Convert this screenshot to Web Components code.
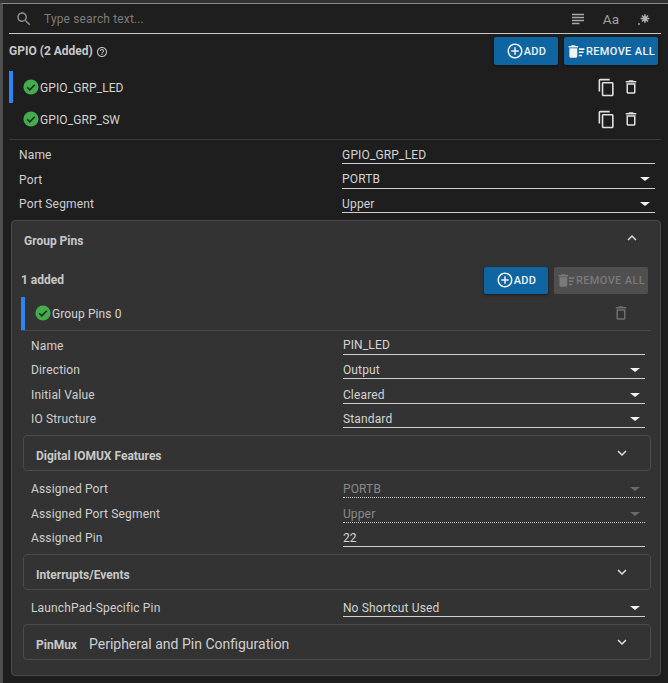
<!DOCTYPE html>
<html>
<head>
<meta charset="utf-8">
<title>GPIO</title>
<style>
    html, body { margin: 0; height: 100%; background: #1e1e1e; }
    body { font-family: Roboto, "Liberation Sans", sans-serif; color: #d4d4d4; overflow: hidden; }
</style>
</head>
<body>
<sc-panel>
    <sc-search></sc-search>
    <sc-module-head count="GPIO (2 Added)"></sc-module-head>
    <sc-row active icons="2">GPIO_GRP_LED</sc-row>
    <sc-row icons="2">GPIO_GRP_SW</sc-row>
    <sc-rule></sc-rule>
    <sc-field label="Name" value="GPIO_GRP_LED"></sc-field>
    <sc-field label="Port" value="PORTB" select></sc-field>
    <sc-field label="Port Segment" value="Upper" select></sc-field>
    <sc-card>
        <sc-group-head></sc-group-head>
        <sc-row active inner icons="1">Group Pins 0</sc-row>
        <sc-field inner label="Name" value="PIN_LED"></sc-field>
        <sc-field inner label="Direction" value="Output" select></sc-field>
        <sc-field inner label="Initial Value" value="Cleared" select></sc-field>
        <sc-field inner label="IO Structure" value="Standard" select></sc-field>
        <sc-accordion title="Digital IOMUX Features" style="margin-top: 3.1px; margin-bottom: 6.2px"></sc-accordion>
        <sc-field inner label="Assigned Port" value="PORTB" select disabled></sc-field>
        <sc-field inner label="Assigned Port Segment" value="Upper" select disabled></sc-field>
        <sc-field inner label="Assigned Pin" value="22"></sc-field>
        <sc-accordion title="Interrupts/Events" style="margin-top: 3.2px; margin-bottom: 6px"></sc-accordion>
        <sc-field inner label="LaunchPad-Specific Pin" value="No Shortcut Used" select></sc-field>
        <sc-accordion title="PinMux" sub="Peripheral and Pin Configuration" style="margin-top: 3.4px"></sc-accordion>
    </sc-card>
</sc-panel>

<script>
// paths de los iconos, todos en viewBox 24
const ICONS = {
    search: "M15.5 14h-.79l-.28-.27C15.41 12.59 16 11.11 16 9.5 16 5.91 13.09 3 9.5 3S3 5.91 3 9.5 5.91 16 9.5 16c1.61 0 3.09-.59 4.23-1.57l.27.28v.79l5 4.99L20.49 19l-4.99-5zm-6 0C7.01 14 5 11.99 5 9.5S7.01 5 9.5 5 14 7.01 14 9.5 11.99 14 9.5 14z",
    subject: "M14 17H4v2h10v-2zm6-8H4v2h16V9zM4 15h16v-2H4v2zM4 5v2h16V5H4z",
    help: "M11 18h2v-2h-2v2zm1-16C6.48 2 2 6.48 2 12s4.48 10 10 10 10-4.48 10-10S17.52 2 12 2zm0 18c-4.41 0-8-3.59-8-8s3.59-8 8-8 8 3.59 8 8-3.59 8-8 8zm0-14c-2.21 0-4 1.79-4 4h2c0-1.1.9-2 2-2s2 .9 2 2c0 2-3 1.75-3 5h2c0-2.25 3-2.5 3-5 0-2.21-1.79-4-4-4z",
    add: "M13 7h-2v4H7v2h4v4h2v-4h4v-2h-4V7zm-1-5C6.48 2 2 6.48 2 12s4.48 10 10 10 10-4.48 10-10S17.52 2 12 2zm0 18c-4.41 0-8-3.59-8-8s3.59-8 8-8 8 3.59 8 8-3.59 8-8 8z",
    sweep: "M15 16h4v2h-4zm0-8h7v2h-7zm0 4h6v2h-6zM3 18c0 1.1.9 2 2 2h6c1.1 0 2-.9 2-2V8H3v10zM14 5h-3l-1-1H6L5 5H2v2h12z",
    copy: "M16 1H4c-1.1 0-2 .9-2 2v14h2V3h12V1zm3 4H8c-1.1 0-2 .9-2 2v14c0 1.1.9 2 2 2h11c1.1 0 2-.9 2-2V7c0-1.1-.9-2-2-2zm0 16H8V7h11v14z",
    trash: "M6 19c0 1.1.9 2 2 2h8c1.1 0 2-.9 2-2V7H6v12zM8 9h8v10H8V9zm7.5-5l-1-1h-5l-1 1H5v2h14V4z",
    up: "M7.41 15.41 12 10.83l4.59 4.58L18 14l-6-6-6 6z",
    down: "M7.41 8.59 12 13.17l4.59-4.58L18 10l-6 6-6-6z"
};

function svg(name, size, color) {
    return `<svg width="${size}" height="${size}" viewBox="0 0 24 24" fill="${color || "currentColor"}" style="display:block;flex:none"><path d="${ICONS[name]}"/></svg>`;
}

const okIcon = `<svg width="18" height="18" viewBox="0 0 18 18" style="display:block;flex:none"><circle cx="9" cy="9" r="7.6" fill="#43ac4b"/><path d="M5.2 9.2l2.6 2.6 5-5" fill="none" stroke="#1f2a20" stroke-width="1.6"/></svg>`;

// estrella con el puntito, no hay path de material que coincida
const starIcon = `<svg width="14" height="14" viewBox="0 0 14 14" style="display:block;flex:none" stroke="#b4b4b4" stroke-width="1.5" fill="#b4b4b4"><path d="M8 2.2v8.6M3.7 6.5h8.6M5 3.5l6 6M11 3.5l-6 6"/><circle cx="2" cy="12" r=".9" stroke="none"/></svg>`;

class ScBase extends HTMLElement {
    connectedCallback() {
        if (!this.shadowRoot) this.attachShadow({ mode: "open" });
        this.render();
    }
}

class ScPanel extends ScBase {
    render() {
        this.shadowRoot.innerHTML = `
            <style>
                :host { display: block; height: 683px; box-sizing: border-box; padding-top: 3px; background: #333; }
                .frame { border-top: 1px solid #8a8a8a; border-left: 3px solid #4f4f4f; height: 100%; box-sizing: border-box; padding: 0 7px 0 6px; background: #1e1e1e; }
            </style>
            <div class="frame"><slot></slot></div>
        `;
    }
}

class ScSearch extends ScBase {
    render() {
        this.shadowRoot.innerHTML = `
            <style>
                :host { display: flex; align-items: center; height: 29px; border-bottom: 1px solid #c8c8c8; color: #8c8c8c; font-size: 12px; letter-spacing: .15px; }
                .mag { margin: 0 11px 0 6px; }
                .ph { flex: 1; color: #7d7d7d; }
                .aa { font-size: 13.5px; color: #a0a0a0; letter-spacing: 0; margin: 0 18px 0 16px; }
                .tools { display: flex; align-items: center; margin-right: 10px; color: #a9a9a9; }
            </style>
            <span class="mag">${svg("search", 18)}</span>
            <span class="ph">Type search text...</span>
            <div class="tools">${svg("subject", 18)}<span class="aa">Aa</span>${starIcon}</div>
        `;
    }
}

class ScBtn extends ScBase {
    render() {
        const off = this.hasAttribute("disabled");
        this.shadowRoot.innerHTML = `
            <style>
                :host { display: inline-flex; }
                .b { display: flex; align-items: center; justify-content: center; box-sizing: border-box; height: ${this.getAttribute("h") || 28}px; width: ${this.getAttribute("w")}px; border-radius: 2px;
                     background: ${off ? "#4f4f4f" : "#0e65a1"}; color: ${off ? "#7a7a7a" : "#f2f2f2"}; font-size: 11px; font-weight: 500; letter-spacing: .35px;
                     box-shadow: ${off ? "none" : "0 1px 3px rgba(0,0,0,.5)"}; }
            </style>
            <div class="b">${svg(this.getAttribute("icon"), this.getAttribute("icon") === "sweep" ? 19 : 18)}<slot></slot></div>
        `;
    }
}

class ScModuleHead extends ScBase {
    render() {
        this.shadowRoot.innerHTML = `
            <style>
                :host { display: flex; align-items: center; height: 34px; margin-bottom: 3px; font-size: 12px; font-weight: 700; color: #c8c8c8; }
                .t { flex: 1; display: flex; align-items: center; gap: 3px; }
                .t svg { margin-top: 2px; }
                .btns { display: flex; gap: 6px; margin-right: 3px; }
            </style>
            <div class="t">${this.getAttribute("count")} ${svg("help", 12)}</div>
            <div class="btns">
                <sc-btn w="64" icon="add">ADD</sc-btn>
                <sc-btn w="94" icon="sweep">REMOVE ALL</sc-btn>
            </div>
        `;
    }
}

class ScRow extends ScBase {
    render() {
        const inner = this.hasAttribute("inner");
        const active = this.hasAttribute("active");
        const two = this.getAttribute("icons") === "2";
        this.shadowRoot.innerHTML = `
            <style>
                :host { display: flex; align-items: center; height: 32px; font-size: 12px; letter-spacing: .1px; color: #d4d4d4; box-sizing: border-box; }
                :host([inner]) { height: 34px; margin: 0 9px 2.3px 9px; border-bottom: 1px solid #4a4a4a; }
                .bar { width: 4px; align-self: stretch; background: ${active ? "#2c85f0" : "transparent"}; margin-right: 9px; }
                .name { flex: 1; padding-top: 2px; }
                .acts { display: flex; align-items: center; gap: 6.5px; margin-right: 21px; color: ${inner ? "#6f6f6f" : "#e2e2e2"}; }
            </style>
            <div class="bar"></div>${okIcon}<div class="name"><slot></slot></div>
            <div class="acts">${two ? svg("copy", 19) : ""}${svg("trash", 18)}</div>
        `;
    }
}

class ScRule extends ScBase {
    render() {
        this.shadowRoot.innerHTML = `
            <style>:host { display: block; height: 1px; margin: 4px 0 2.9px; background: #3a3a3a; }</style>
        `;
    }
}

class ScField extends ScBase {
    render() {
        const sel = this.hasAttribute("select");
        const off = this.hasAttribute("disabled");
        this.shadowRoot.innerHTML = `
            <style>
                :host { display: grid; grid-template-columns: 50.8% 1fr; height: 24.6px; font-size: 12px; letter-spacing: .15px; color: #d0d0d0; padding: 0 6px 0 10px; }
                :host([inner]) { padding: 0 15px 0 19px; }
                .l { align-self: center; }
                .v { display: flex; align-items: center; justify-content: space-between; box-sizing: border-box; align-self: start; height: 21.4px; padding-top: 3.6px;
                     border-bottom: 1px ${off ? "dotted" : "solid"} #cfcfcf; color: ${off ? "#8a8a8a" : "#d4d4d4"}; }
                :host([inner]) .v { height: 21.3px; padding-top: 4px; }
                .arrow { width: 0; height: 0; border: 5px solid transparent; border-bottom: 0; border-top-width: 4.5px; border-top-color: ${off ? "#6a6a6a" : "#f2f2f2"}; margin-right: 5px; }
            </style>
            <div class="l">${this.getAttribute("label")}</div>
            <div class="v"><span>${this.getAttribute("value")}</span>${sel ? '<i class="arrow"></i>' : ""}</div>
        `;
    }
}

class ScCard extends ScBase {
    render() {
        this.shadowRoot.innerHTML = `
            <style>
                :host { display: block; box-sizing: border-box; margin: 3.3px 0 0 2px; height: 456px; background: #333; border: 1px solid #4b4b4b; border-radius: 4px; }
            </style>
            <slot></slot>
        `;
    }
}

class ScGroupHead extends ScBase {
    render() {
        this.shadowRoot.innerHTML = `
            <style>
                :host { display: block; color: #c8c8c8; font-size: 12px; font-weight: 700; }
                .top { display: flex; align-items: center; justify-content: space-between; height: 40px; padding: 0 19px 0 12px; }
                .top svg { margin-bottom: 6px; }
                .sub { display: flex; align-items: center; justify-content: space-between; height: 27px; padding: 0 12px 0 9px; margin: 6px 0 3px; }
                .btns { display: flex; gap: 6px; }
            </style>
            <div class="top"><span>Group Pins</span>${svg("up", 18, "#e0e0e0")}</div>
            <div class="sub"><span>1 added</span>
                <div class="btns"><sc-btn w="64" h="27" icon="add">ADD</sc-btn><sc-btn w="94" h="27" icon="sweep" disabled>REMOVE ALL</sc-btn></div>
            </div>
        `;
    }
}

class ScAccordion extends ScBase {
    render() {
        const sub = this.getAttribute("sub");
        this.shadowRoot.innerHTML = `
            <style>
                :host { display: flex; align-items: center; box-sizing: border-box; height: 36px; margin: 3.4px 9px 6px 11px; padding: 0 19px 0 12px; border: 1px solid #4b4b4b; border-radius: 4px; color: #c8c8c8; font-size: 12px; font-weight: 700; }
                .t { flex: 1; padding-top: ${sub ? 4 : 6}px; }
                .s { font-size: 14px; font-weight: 400; margin-left: 12px; color: #d0d0d0; }
            </style>
            <div class="t">${this.getAttribute("title")}${sub ? `<span class="s">${sub}</span>` : ""}</div>
            ${svg("down", 18, "#e0e0e0")}
        `;
    }
}

customElements.define("sc-panel", ScPanel);
customElements.define("sc-search", ScSearch);
customElements.define("sc-btn", ScBtn);
customElements.define("sc-module-head", ScModuleHead);
customElements.define("sc-row", ScRow);
customElements.define("sc-rule", ScRule);
customElements.define("sc-field", ScField);
customElements.define("sc-card", ScCard);
customElements.define("sc-group-head", ScGroupHead);
customElements.define("sc-accordion", ScAccordion);
</script>
</body>
</html>
